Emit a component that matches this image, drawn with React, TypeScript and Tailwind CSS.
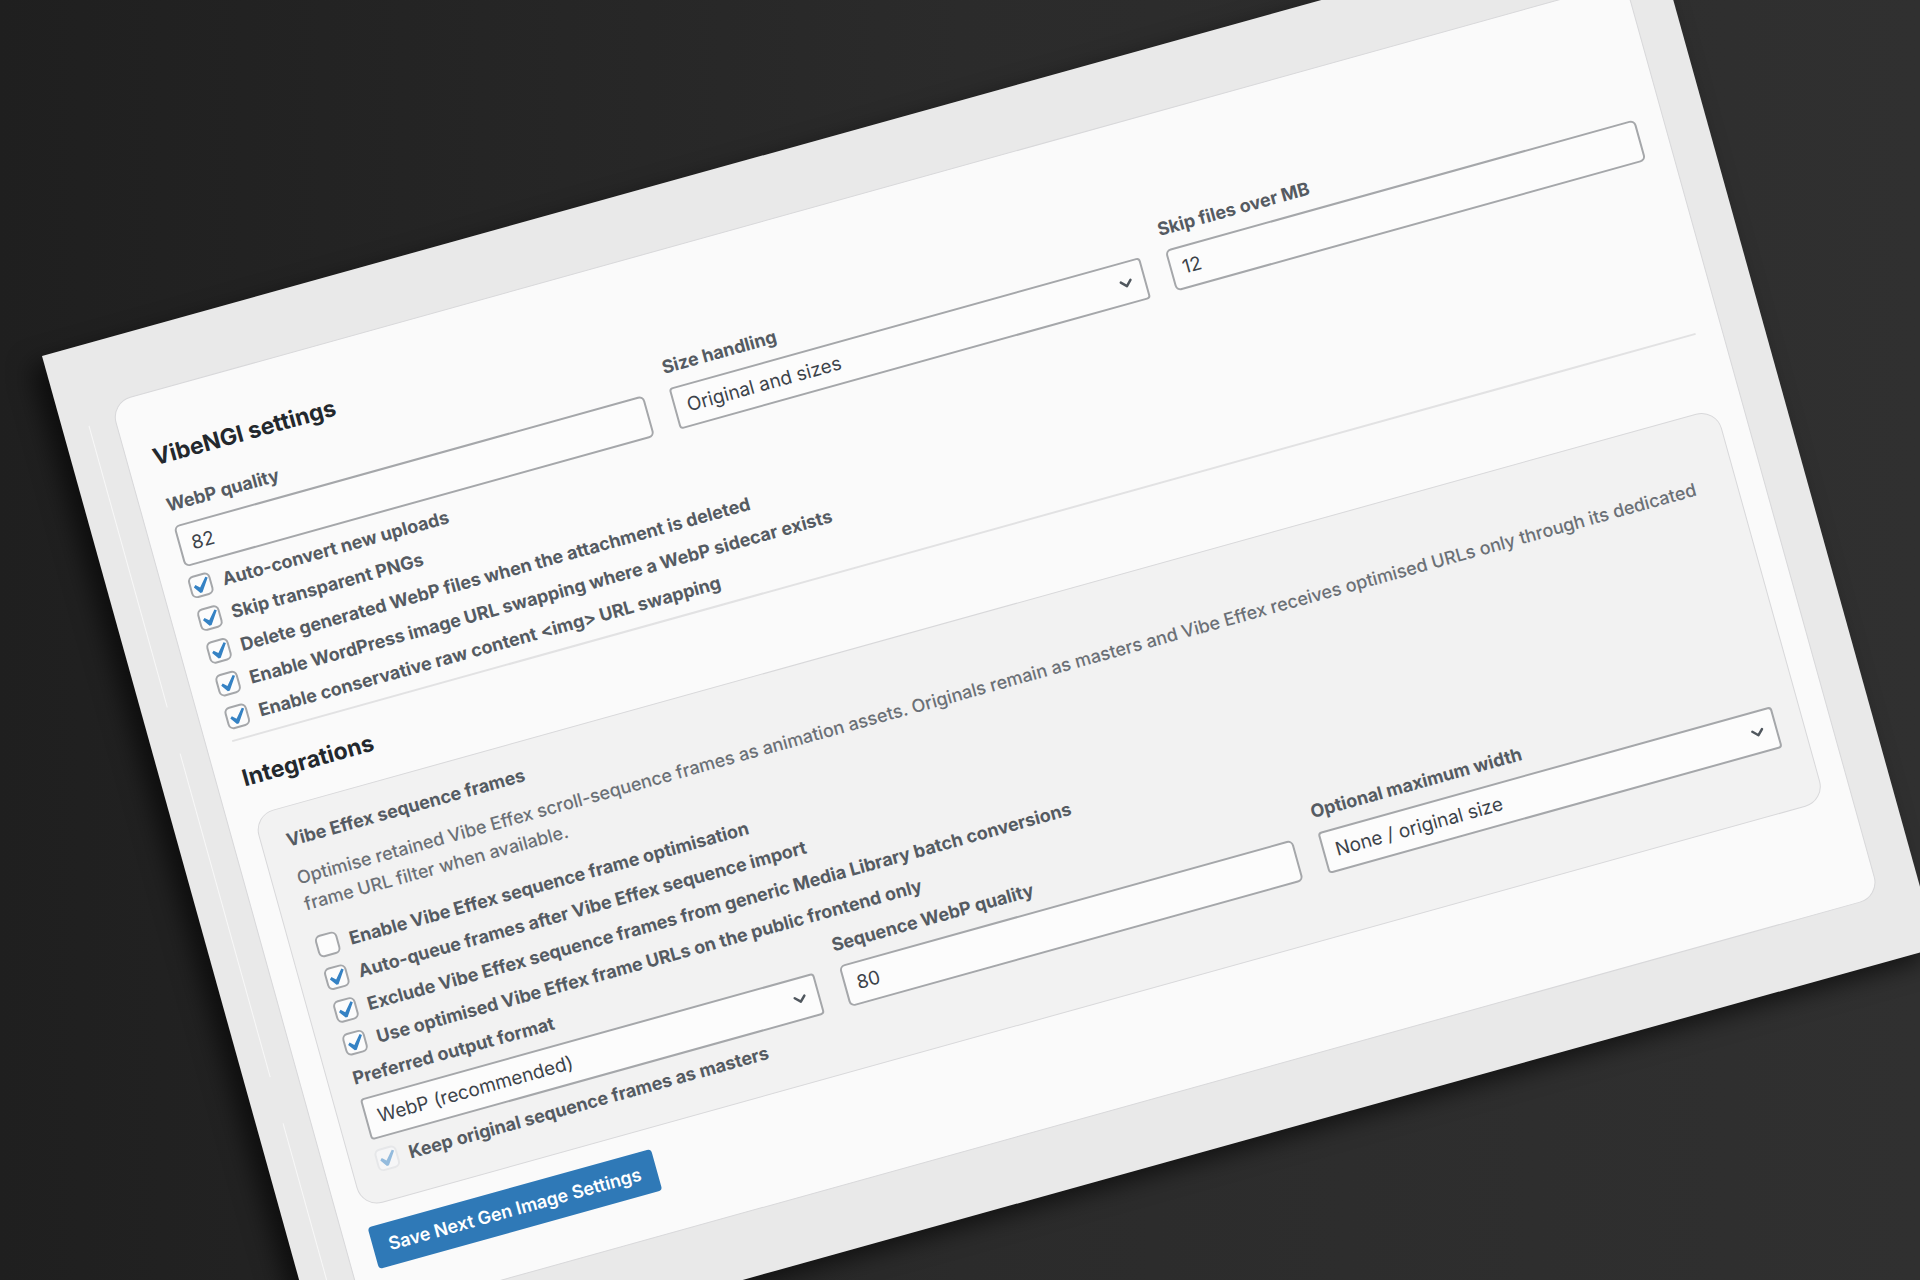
import { useState } from 'react';
import type { ReactNode } from 'react';
import { ChevronDown } from 'lucide-react';

function CheckRow({ label, checked, disabled = false }: { label: string; checked: boolean; disabled?: boolean }) {
  const [on, setOn] = useState(checked);
  return <label className="flex w-fit items-center gap-[11px] text-[18px] leading-[23px] font-bold text-[#555b62]">
      <span className="relative flex">
        <input type="checkbox" checked={on} disabled={disabled} onChange={e => setOn(e.target.checked)} className="peer h-[23px] w-[23px] appearance-none rounded-[6px] border-2 border-[#a5a7aa] bg-[#fcfcfc] disabled:border-[#e6e7e9] disabled:bg-[#f6f6f7]" />
        <svg viewBox="3 2 15 15" className="pointer-events-none absolute inset-0 hidden h-full w-full text-[#3582c4] peer-checked:block peer-disabled:opacity-50" aria-hidden="true">
          <path d="M14.83 4.89l1.34.94-5.81 8.38H9.02L5.78 9.67l1.34-1.25 2.57 2.4z" fill="currentColor" />
        </svg>
      </span>
      {label}
    </label>;
}

function Field({ id, label, children }: { id: string; label: string; children: ReactNode }) {
  return <div className="flex flex-col gap-[10px]">
      <label htmlFor={id} className="text-[18px] leading-[23px] font-bold text-[#555b62]">{label}</label>
      {children}
    </div>;
}

function TextField({ id, label, value }: { id: string; label: string; value: string }) {
  return <Field id={id} label={label}>
      <input id={id} type="text" inputMode="numeric" defaultValue={value} className="mx-px h-[43px] rounded-[6px] border-2 border-[#a5a7aa] bg-[#fcfcfc] px-[11px] text-[19px] text-[#3c434a] outline-none" />
    </Field>;
}

function SelectField({ id, label, options }: { id: string; label: string; options: string[] }) {
  return <Field id={id} label={label}>
      <div className="relative mx-px flex">
        <select id={id} className="h-[43px] w-full appearance-none rounded-[4px] border-2 border-[#a5a7aa] bg-[#fcfcfc] px-[11px] pt-[2px] text-[19px] text-[#3c434a] outline-none">
          {options.map(option => <option key={option}>{option}</option>)}
        </select>
        <ChevronDown className="pointer-events-none absolute top-3 right-[10px] h-5 w-5 text-[#50575e]" strokeWidth={3} />
      </div>
    </Field>;
}

export default function App() {
  return <main className="relative h-screen overflow-hidden bg-linear-to-r from-[#1f1f1f] via-[#2b2b2b] to-[#303030] font-['Inter',sans-serif]">
      <div className="absolute top-[356px] left-[42px] w-[1667px] origin-top-left rotate-[-15.55deg] bg-[#e9e9e9] pt-[63px] pr-[41px] pb-16 pl-[53px] shadow-[-14px_8px_24px_rgba(0,0,0,0.6)]">
        <div className="absolute inset-y-0 left-[26px] flex flex-col gap-12 pt-20" aria-hidden="true">
          <span className="h-[292px] w-px bg-[#f8f8f8]" />
          <span className="h-[336px] w-px bg-[#f8f8f8]" />
          <span className="w-px flex-1 bg-[#f8f8f8]" />
        </div>
        <form onSubmit={e => e.preventDefault()} className="rounded-[21px] border border-[#d8d8da] bg-[#fafafa] px-[26px] pt-[26px] pb-[43px]">
          <section aria-labelledby="settings-heading">
            <h2 id="settings-heading" className="my-[23px] text-[23px] leading-[30px] font-bold text-[#23282d]">VibeNGI settings</h2>
            <div className="grid grid-cols-3 gap-6">
              <TextField id="webp-quality" label="WebP quality" value="82" />
              <SelectField id="size-handling" label="Size handling" options={['Original and sizes', 'Original only', 'Sizes only']} />
              <TextField id="skip-over" label="Skip files over MB" value="12" />
            </div>
            <div className="my-[10px] flex flex-col gap-[11px]">
              <CheckRow label="Auto-convert new uploads" checked />
              <CheckRow label="Skip transparent PNGs" checked />
              <CheckRow label="Delete generated WebP files when the attachment is deleted" checked />
              <CheckRow label="Enable WordPress image URL swapping where a WebP sidecar exists" checked />
              <CheckRow label="Enable conservative raw content <img> URL swapping" checked />
            </div>
          </section>
          <hr className="border-t-2 border-[#e2e2e3]" />
          <section aria-labelledby="integrations-heading">
            <h2 id="integrations-heading" className="my-[23px] text-[23px] leading-[30px] font-bold text-[#23282d]">Integrations</h2>
            <div className="rounded-[21px] border border-[#d8d8da] bg-[#f2f2f2] px-[25px] pt-[21px] pb-[29px]">
              <h3 className="text-[18px] leading-[23px] font-bold text-[#555b62]">Vibe Effex sequence frames</h3>
              <p className="mt-[14px] mb-5 text-[18px] leading-[27px] font-medium text-[#6b7076]">
                Optimise retained Vibe Effex scroll-sequence frames as animation assets. Originals remain as masters and Vibe Effex receives optimised URLs only through its dedicated frame URL filter when available.
              </p>
              <div className="my-[11px] flex flex-col gap-[11px]">
                <CheckRow label="Enable Vibe Effex sequence frame optimisation" checked={false} />
                <CheckRow label="Auto-queue frames after Vibe Effex sequence import" checked />
                <CheckRow label="Exclude Vibe Effex sequence frames from generic Media Library batch conversions" checked />
                <CheckRow label="Use optimised Vibe Effex frame URLs on the public frontend only" checked />
              </div>
              <div className="mb-[10px] grid grid-cols-3 gap-6">
                <SelectField id="output-format" label="Preferred output format" options={['WebP (recommended)', 'AVIF']} />
                <TextField id="sequence-quality" label="Sequence WebP quality" value="80" />
                <SelectField id="max-width" label="Optional maximum width" options={['None / original size', '1920px', '1280px']} />
              </div>
              <CheckRow label="Keep original sequence frames as masters" checked disabled />
            </div>
          </section>
          <button type="submit" className="mt-5 h-[43px] rounded-[4px] bg-[#2f79b7] px-4 text-[18px] font-semibold text-white">
            Save Next Gen Image Settings
          </button>
        </form>
      </div>
    </main>;
}
